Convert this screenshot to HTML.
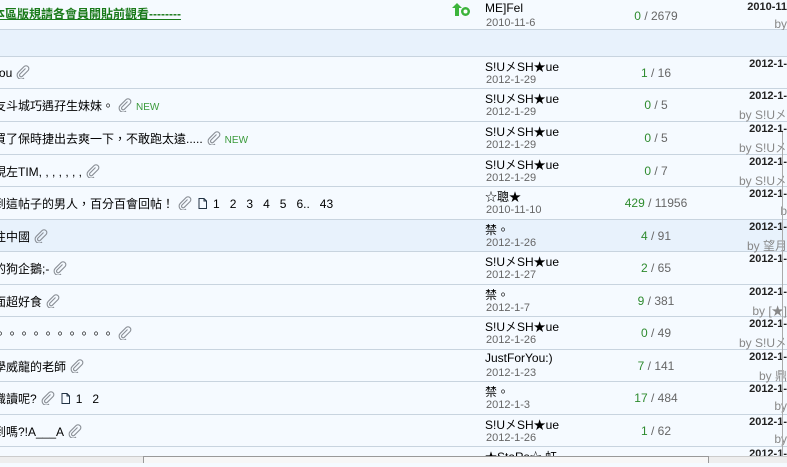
<!DOCTYPE html>
<html><head><meta charset="utf-8"><style>
*{margin:0;padding:0;box-sizing:border-box}
body{width:787px;height:463px;overflow:hidden;background:#f5faff;font-family:"Liberation Sans","Noto Sans CJK TC",sans-serif;font-size:12px;color:#000;position:relative}
.r{position:absolute;left:0;width:787px;border-bottom:1px solid #c8d4df;white-space:nowrap}
.t{position:absolute;left:-6px;top:8px;font-size:12px}
.a{position:absolute;left:485px;top:1px;font-size:12px}
.d{position:absolute;left:486px;top:17px;font-size:11px;color:#666}
.c{position:absolute;left:606px;width:100px;text-align:center;top:9px;font-size:12px;color:#666}
.c b{font-weight:normal;color:#2e8b2e}
.l1{position:absolute;right:0;top:1px;font-size:11px;font-weight:bold;color:#222}
.l2{position:absolute;right:0;top:17px;font-size:12px;color:#888}
.new{color:#3a9a3a;font-size:10px;margin-left:4px}
.clip{display:inline-block;vertical-align:-2px;margin-left:4px}
.pg{margin-left:6px}
.pg span{margin-right:10px}
</style></head><body>
<svg width="0" height="0" style="position:absolute"><defs><symbol id="cl" viewBox="0 0 14 14"><path d="M9.5 3.5 L4 9 A1.6 1.6 0 0 0 6.3 11.3 L12 5.6 A2.8 2.8 0 0 0 8 1.6 L2.3 7.3 A4 4 0 0 0 8 13" fill="none" stroke="#8a8f96" stroke-width="1.1"/></symbol></defs></svg>

<div class="r" style="top:0;height:30px;background:#f5faff">
<div class="t" style="top:5px;left:-7px;color:#1a7a1a;font-weight:bold;text-decoration:underline">本區版規請各會員開貼前觀看--------</div>
<svg style="position:absolute;left:452px;top:3px" width="20" height="14" viewBox="0 0 20 14"><path d="M5 0 L10 5 L7 5 L7 13 L3 13 L3 5 L0 5Z" fill="#3cb43c"/><circle cx="13.5" cy="8.5" r="4.5" fill="#3cb43c"/><circle cx="13.5" cy="8.5" r="2" fill="#fff"/></svg>
<div class="a">ME]Fel</div><div class="d">2010-11-6</div>
<div class="c"><b>0</b> / 2679</div>
<div class="l1">2010-11</div><div class="l2">by</div>
</div>
<div class="r" style="top:30px;height:27px;background:#e8f2fc"></div>

<div class="r" style="top:57px;height:32px"><div class="t" style="left:-8px">You<svg class="clip" width="14" height="14"><use href="#cl"/></svg></div><div class="a">S!U㐅SH★ue</div><div class="d">2012-1-29</div><div class="c"><b>1</b> / 16</div><div class="l1">2012-1-</div></div>
<div class="r" style="top:89px;height:33px"><div class="t">友斗城巧遇孖生妹妹。<svg class="clip" width="14" height="14"><use href="#cl"/></svg><span class="new">NEW</span></div><div class="a">S!U㐅SH★ue</div><div class="d">2012-1-29</div><div class="c"><b>0</b> / 5</div><div class="l1">2012-1-</div><div class="l2">by S!U㐅</div></div>
<div class="r" style="top:122px;height:33px"><div class="t">買了保時捷出去爽一下，不敢跑太遠.....<svg class="clip" width="14" height="14"><use href="#cl"/></svg><span class="new">NEW</span></div><div class="a">S!U㐅SH★ue</div><div class="d">2012-1-29</div><div class="c"><b>0</b> / 5</div><div class="l1">2012-1-</div><div class="l2">by S!U㐅</div></div>
<div class="r" style="top:155px;height:32px"><div class="t">現左TIM, , , , , , ,<svg class="clip" width="14" height="14"><use href="#cl"/></svg></div><div class="a">S!U㐅SH★ue</div><div class="d">2012-1-29</div><div class="c"><b>0</b> / 7</div><div class="l1">2012-1-</div><div class="l2">by S!U㐅</div></div>
<div class="r" style="top:187px;height:33px"><div class="t">到這帖子的男人，百分百會回帖！<svg class="clip" width="14" height="14"><use href="#cl"/></svg><span class="pg"><svg width="9" height="11" style="vertical-align:-1px;margin-right:6px"><path d="M1 .5H6L8.5 3V10.5H1Z M6 .5V3H8.5" fill="none" stroke="#234" /></svg><span>1</span><span>2</span><span>3</span><span>4</span><span>5</span><span>6..</span><span>43</span></span></div><div class="a">☆聰★</div><div class="d">2010-11-10</div><div class="c"><b>429</b> / 11956</div><div class="l1">2012-1-</div><div class="l2">b</div></div>
<div class="r" style="top:220px;height:32px;background:#e8f2fc"><div class="t">往中國<svg class="clip" width="14" height="14"><use href="#cl"/></svg></div><div class="a">禁。</div><div class="d">2012-1-26</div><div class="c"><b>4</b> / 91</div><div class="l1">2012-1-</div><div class="l2">by 望月</div></div>
<div class="r" style="top:252px;height:33px"><div class="t">的狗企鵝;-<svg class="clip" width="14" height="14"><use href="#cl"/></svg></div><div class="a">S!U㐅SH★ue</div><div class="d">2012-1-27</div><div class="c"><b>2</b> / 65</div><div class="l1">2012-1-</div></div>
<div class="r" style="top:285px;height:32px"><div class="t">面超好食<svg class="clip" width="14" height="14"><use href="#cl"/></svg></div><div class="a">禁。</div><div class="d">2012-1-7</div><div class="c"><b>9</b> / 381</div><div class="l1">2012-1-</div><div class="l2">by [★]</div></div>
<div class="r" style="top:317px;height:33px"><div class="t">。。。。。。。。。。<svg class="clip" width="14" height="14"><use href="#cl"/></svg></div><div class="a">S!U㐅SH★ue</div><div class="d">2012-1-26</div><div class="c"><b>0</b> / 49</div><div class="l1">2012-1-</div><div class="l2">by S!U㐅</div></div>
<div class="r" style="top:350px;height:32px"><div class="t">學威龍的老師<svg class="clip" width="14" height="14"><use href="#cl"/></svg></div><div class="a">JustForYou:)</div><div class="d">2012-1-23</div><div class="c"><b>7</b> / 141</div><div class="l1">2012-1-</div><div class="l2">by 鼎</div></div>
<div class="r" style="top:382px;height:33px"><div class="t">識讀呢?<svg class="clip" width="14" height="14"><use href="#cl"/></svg><span class="pg"><svg width="9" height="11" style="vertical-align:-1px;margin-right:6px"><path d="M1 .5H6L8.5 3V10.5H1Z M6 .5V3H8.5" fill="none" stroke="#234" /></svg><span>1</span><span>2</span></span></div><div class="a">禁。</div><div class="d">2012-1-3</div><div class="c"><b>17</b> / 484</div><div class="l1">2012-1-</div><div class="l2">by</div></div>
<div class="r" style="top:415px;height:32px"><div class="t">到嗎?!A___A<svg class="clip" width="14" height="14"><use href="#cl"/></svg></div><div class="a">S!U㐅SH★ue</div><div class="d">2012-1-26</div><div class="c"><b>1</b> / 62</div><div class="l1">2012-1-</div><div class="l2">by</div></div>
<div class="r" style="top:447px;height:20px;border:none"><div class="a">★StaRs☆.虹</div><div class="l1">2012-1-</div></div>

<div style="position:absolute;left:782px;top:132px;width:1px;height:324px;background:#aaa"></div>
<div style="position:absolute;left:0;top:456px;width:787px;height:7px;background:#eee;border-top:1px solid #ccc"></div>
<div style="position:absolute;left:143px;top:456px;width:566px;height:7px;background:#f7f7f7;border:1px solid #999;border-bottom:none"></div>
</body></html>
